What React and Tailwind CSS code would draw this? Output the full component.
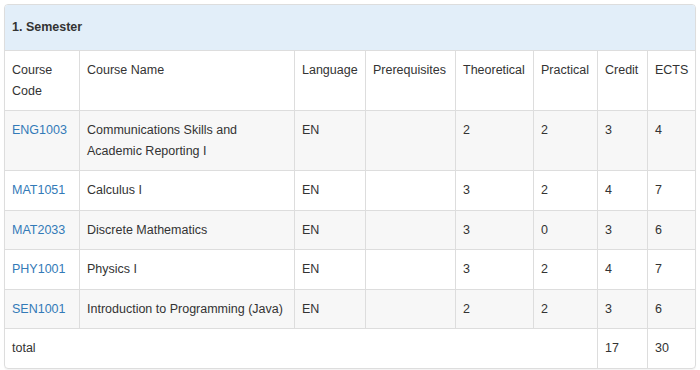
const courses = [
  { code: 'ENG1003', name: ['Communications Skills and', 'Academic Reporting I'], lang: 'EN', pre: '', theo: 2, prac: 2, credit: 3, ects: 4 },
  { code: 'MAT1051', name: ['Calculus I'], lang: 'EN', pre: '', theo: 3, prac: 2, credit: 4, ects: 7 },
  { code: 'MAT2033', name: ['Discrete Mathematics'], lang: 'EN', pre: '', theo: 3, prac: 0, credit: 3, ects: 6 },
  { code: 'PHY1001', name: ['Physics I'], lang: 'EN', pre: '', theo: 3, prac: 2, credit: 4, ects: 7 },
  { code: 'SEN1001', name: ['Introduction to Programming (Java)'], lang: 'EN', pre: '', theo: 2, prac: 2, credit: 3, ects: 6 },
];

const cell = 'px-[7px] py-[9px] align-top text-left font-normal whitespace-nowrap border-b border-[#ddd]';
const cellL = cell + ' border-l';

export default function App() {
  return (
    <div className="w-[700px] h-[370px] bg-white p-1 text-[#333] text-[12.5px] leading-[20.5px] [font-family:'Liberation_Sans',Arial,sans-serif]">
      <div className="border border-[#ddd] rounded overflow-hidden shadow-[0_1px_1px_rgba(0,0,0,0.05)]">
        <div className="h-[46px] px-[7px] flex items-center bg-[#e2eef9] border-b border-[#ddd] font-bold">
          1. Semester
        </div>
        <table className="w-full table-fixed border-separate border-spacing-0">
          <colgroup>
            <col className="w-[74px]" />
            <col className="w-[215px]" />
            <col className="w-[71px]" />
            <col className="w-[90px]" />
            <col className="w-[78px]" />
            <col className="w-[64px]" />
            <col className="w-[50px]" />
            <col className="w-[48px]" />
          </colgroup>
          <thead>
            <tr>
              <th className={cell}>Course<br />Code</th>
              <th className={cellL}>Course Name</th>
              <th className={cellL}>Language</th>
              <th className={cellL}>Prerequisites</th>
              <th className={cellL}>Theoretical</th>
              <th className={cellL}>Practical</th>
              <th className={cellL}>Credit</th>
              <th className={cellL}>ECTS</th>
            </tr>
          </thead>
          <tbody>
            {courses.map((c, i) => (
              <tr key={c.code} className={i % 2 === 0 ? 'bg-[#f7f7f7]' : 'bg-white'}>
                <td className={cell}>
                  <a href="#" className="text-[#337ab7]">{c.code}</a>
                </td>
                <td className={cellL}>
                  {c.name.map((line, j) => (
                    <div key={j}>{line}</div>
                  ))}
                </td>
                <td className={cellL}>{c.lang}</td>
                <td className={cellL}>{c.pre}</td>
                <td className={cellL}>{c.theo}</td>
                <td className={cellL}>{c.prac}</td>
                <td className={cellL}>{c.credit}</td>
                <td className={cellL}>{c.ects}</td>
              </tr>
            ))}
            <tr>
              <td colSpan={6} className="px-[7px] py-[9px] align-top">total</td>
              <td className="px-[7px] py-[9px] align-top border-l border-[#ddd]">17</td>
              <td className="px-[7px] py-[9px] align-top border-l border-[#ddd]">30</td>
            </tr>
          </tbody>
        </table>
      </div>
    </div>
  );
}
